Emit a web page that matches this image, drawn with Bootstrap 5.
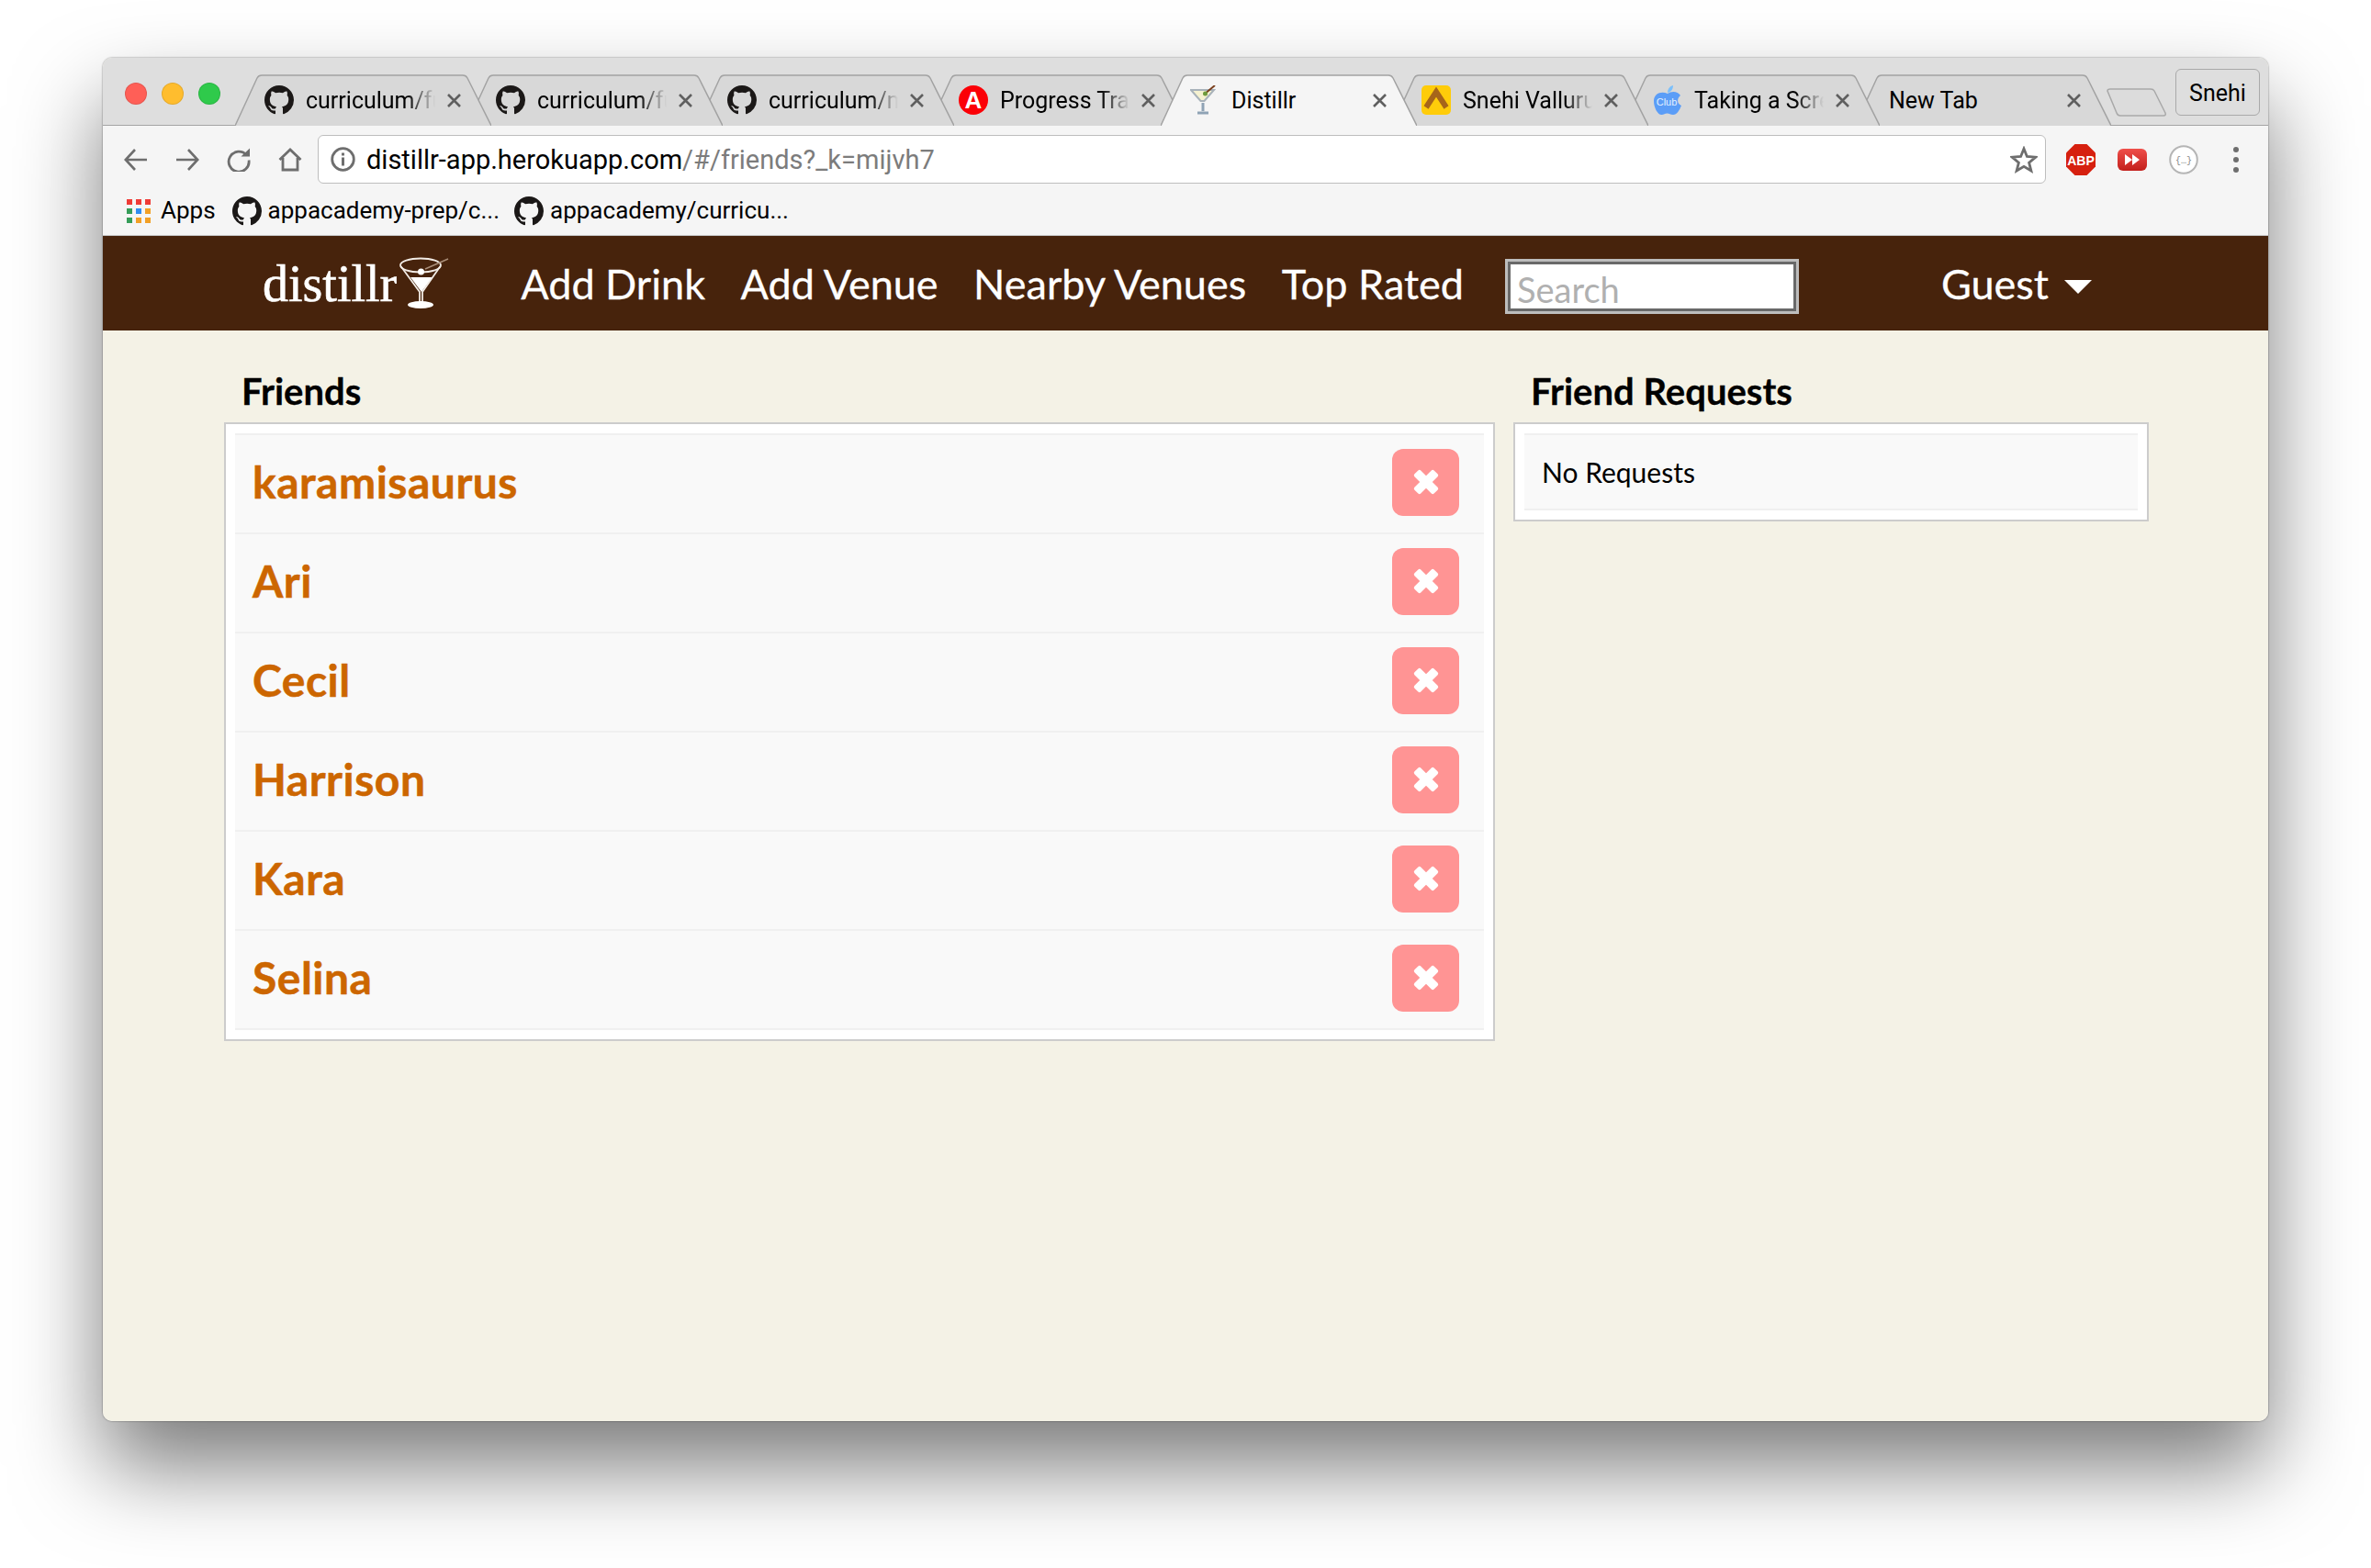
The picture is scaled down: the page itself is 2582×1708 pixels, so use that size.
<!DOCTYPE html>
<html lang="en">
<head>
    <meta charset="UTF-8">
    <title>Distillr</title>
    <link href="https://cdn.jsdelivr.net/npm/bootstrap@5.3.0/dist/css/bootstrap.min.css" rel="stylesheet">
    <style>
        body {
            background: #fff;
            height: 1708px;
            overflow: hidden;
            padding: 63px 0 0 112px;
            font-family: "Lato", sans-serif;
        }
        .mac-window {
            width: 2358px;
            height: 1485px;
            border-radius: 10px;
            overflow: hidden;
            background: #f4f2e6;
        }
        .window-frame {
            width: 2358px;
            height: 1485px;
            border-radius: 10px;
            box-shadow: 0 50px 95px rgba(0, 0, 0, .52), 0 0 2px rgba(0, 0, 0, .55);
        }

        /* browser chrome */
        .chrome-text { font-family: "Roboto", "Liberation Sans", sans-serif; color: #000; }
        .tab-strip {
            height: 74px;
            background: #dedede;
            border-bottom: 1px solid #a5a5a5;
            padding-left: 24px;
        }
        .traffic-lights { width: 120px; gap: 16px; align-self: flex-start; padding-top: 27px; }
        .light { width: 24px; height: 24px; border-radius: 50%; border: 1px solid rgba(0, 0, 0, .1); }
        .light-red { background: #ff5f57; }
        .light-yellow { background: #ffbd2e; }
        .light-green { background: #2fca4b; }
        .tab-list { margin-bottom: -1px; }
        .chrome-tab {
            position: relative;
            width: 279px;
            height: 56px;
            margin-right: -27px;
            font-size: 25px;
            padding-left: 32px;
        }
        .chrome-tab:last-child { margin-right: 0; }
        .chrome-tab:nth-child(1) { z-index: 8; }
        .chrome-tab:nth-child(2) { z-index: 7; }
        .chrome-tab:nth-child(3) { z-index: 6; }
        .chrome-tab:nth-child(4) { z-index: 5; }
        .chrome-tab:nth-child(5) { z-index: 9; }
        .chrome-tab:nth-child(6) { z-index: 4; }
        .chrome-tab:nth-child(7) { z-index: 3; }
        .chrome-tab:nth-child(8) { z-index: 2; }
        .tab-shape { position: absolute; inset: 0; width: 279px; height: 56px; fill: #d8d8d8; stroke: #a3a3a3; stroke-width: 1.5; }
        .tab-active .tab-shape { fill: #f5f5f5; }
        .tab-icon { position: relative; width: 32px; height: 32px; flex: none; }
        .tab-title {
            position: relative;
            width: 141px;
            margin-left: 13px;
            padding-top: 2px;
            white-space: nowrap;
            -webkit-mask-image: linear-gradient(to right, #000 78%, transparent 100%);
            mask-image: linear-gradient(to right, #000 78%, transparent 100%);
        }
        .tab-title-plain { -webkit-mask-image: none; mask-image: none; }
        .tab-title-wide { width: 181px; margin-left: 5px; -webkit-mask-image: none; mask-image: none; }
        .tab-close { position: relative; width: 15px; height: 15px; margin-left: 13px; flex: none; }
        .new-tab-btn { width: 65px; height: 31px; margin: 0 0 9px -5px; flex: none; fill: #dcdcdc; stroke: #a9a9a9; stroke-width: 1.5; }
        .profile-btn {
            width: 92px;
            height: 51px;
            margin: 0 0 10px 10px;
            padding-top: 2px;
            border: 1px solid #a9a9a9;
            border-radius: 6px;
            font-size: 25px;
        }
        .toolbar { height: 120px; background: #f5f5f5; border-bottom: 1px solid #c4c4c4; }
        .url-row { height: 73px; padding: 10px 0 10px 23px; }
        .tool-icon { width: 26px; height: 26px; flex: none; margin-right: 30px; }
        .tool-icon:nth-child(4) { margin-right: 17px; }
        .url-box {
            width: 1882px;
            height: 53px;
            background: #fff;
            border: 1px solid #bdbdbd;
            border-radius: 6px;
            padding: 0 8px 0 13px;
            font-size: 29px;
        }
        .url-text { margin-left: 12px; padding-top: 2px; }
        .url-dim { color: #7c7c7c; }
        .ext-row { margin-left: 22px; }
        .ext-slot { width: 32px; height: 34px; margin-right: 24px; flex: none; }
        .ext-menu { margin-left: 13px; }
        .bookmark-row { padding-left: 26px; font-size: 26px; height: 39px; }
        .bm-item { gap: 7px; }
        .bm-apps { gap: 11px; margin-right: 18px; }
        .gh-icon { width: 32px; height: 32px; flex: none; }
        .apps-grid { width: 26px; height: 26px; }

        /* distillr page */
        .distillr-nav { height: 103px; background: #47230c; padding: 0 0 0 174px; }
        .distillr-brand {
            color: #fff;
            font-family: "Liberation Serif", serif;
            font-size: 56px;
            line-height: 1;
            padding: 0;
            margin: 0 78px 0 0;
            -webkit-text-stroke: .6px #fff;
        }
        .distillr-brand:hover { color: #fff; }
        .brand-glass { width: 54px; height: 58px; margin-left: 3px; }
        .distillr-links { gap: 38.500px; flex-direction: row; }
        .distillr-links .nav-link, .guest-link.nav-link {
            color: #fff;
            font-size: 45px;
            line-height: 1.2;
            padding: 0;
            -webkit-text-stroke: .3px #fff;
        }
        .search-box.form-control {
            width: 320px;
            height: 60px;
            margin: 6px 0 0 45px;
            padding: 6px 10px 0;
            font-family: "Lato", sans-serif;
            font-size: 38px;
            border-radius: 0;
            border: 3px solid #bdbdbd;
            box-shadow: inset 0 3px 0 #696969, inset 3px 0 0 #696969, inset 0 -3px 0 #696969, inset -3px 0 0 #696969;
        }
        .search-box.form-control::placeholder { color: #b0b0b0; }
        .guest-link { margin-left: 155px; }
        .guest-link.dropdown-toggle::after {
            margin-left: 17px;
            vertical-align: 6px;
            border-top-width: 15px;
            border-left-width: 15px;
            border-right-width: 15px;
        }
        .page-body { padding: 42px 130px 0 132px; display: grid; grid-template-columns: 2fr 1fr; column-gap: 20px; align-items: start; }
        .section-title {
            font-size: 40px;
            font-weight: 700;
            line-height: 48px;
            margin: 0 0 10px 19px;
            color: #000;
            -webkit-text-stroke: .3px #000;
        }
        .friends-panel { background: #fff; border: 2px solid #ccc; padding: 10px; }
        .friends-panel .list-group-item {
            background: #f9f9f9;
            border: 0;
            border-top: 2px solid #f0f0f0;
            border-radius: 0;
            padding: 0 27px 4px 19px;
            height: 108px;
        }
        .friends-panel .list-group-item:last-child { border-bottom: 2px solid #f0f0f0; height: 110px; }
        .friends-panel .no-requests.list-group-item { height: 84px; padding: 0 0 0 19px; font-size: 30px; color: #000; }
        .friend-name {
            color: #cc6600;
            font-size: 48px;
            font-weight: 700;
            letter-spacing: .5px;
            -webkit-text-stroke: .5px #cc6600;
            text-decoration: none;
        }
        .friend-name:hover { color: #cc6600; }
        .remove-btn.btn {
            width: 73px;
            height: 73px;
            padding: 0;
            border: 0;
            border-radius: 12px;
            background: #ff9494;
        }
        .remove-btn svg { width: 40px; height: 40px; }
    </style>
</head>
<body>
<svg width="0" height="0" class="position-absolute">
    <defs>
        <linearGradient id="ytRed" x1="0" y1="0" x2="0" y2="1"><stop offset="0" stop-color="#ef4f4a"/><stop offset="1" stop-color="#c31f1b"/></linearGradient>
        <symbol id="gh" viewBox="0 0 16 16"><path fill="#1b1817" stroke="none" d="M8 0C3.58 0 0 3.58 0 8c0 3.54 2.29 6.53 5.47 7.59.4.07.55-.17.55-.38 0-.19-.01-.82-.01-1.49-2.01.37-2.53-.49-2.69-.94-.09-.23-.48-.94-.82-1.13-.28-.15-.68-.52-.01-.53.63-.01 1.08.58 1.23.82.72 1.21 1.87.87 2.33.66.07-.52.28-.87.51-1.07-1.78-.2-3.64-.89-3.64-3.95 0-.87.31-1.59.82-2.15-.08-.2-.36-1.02.08-2.12 0 0 .67-.21 2.2.82.64-.18 1.32-.27 2-.27.68 0 1.36.09 2 .27 1.53-1.04 2.2-.82 2.2-.82.44 1.1.16 1.92.08 2.12.51.56.82 1.27.82 2.15 0 3.07-1.87 3.75-3.65 3.95.29.25.54.73.54 1.48 0 1.07-.01 1.93-.01 2.2 0 .21.15.46.55.38A8.013 8.013 0 0016 8c0-4.42-3.58-8-8-8z"/></symbol>
        <symbol id="tabBg" viewBox="0 0 279 56"><path d="M0 56 L24 4 Q25.500 1 29 1 L248 1 Q251.500 1 253 4 L279 56"/></symbol>
        <symbol id="closeX" viewBox="0 0 15 15"><path d="M1 1 L14 14 M14 1 L1 14" stroke="#5f5f5f" stroke-width="2.600" fill="none"/></symbol>
        <symbol id="removeX" viewBox="0 0 40 40"><g fill="#fff" transform="rotate(45 20 20)"><rect x="5" y="15.200" width="30" height="9.600" rx="2"/><rect x="15.200" y="5" width="9.600" height="30" rx="2"/></g></symbol>
    </defs>
</svg>

<div class="window-frame">
<div class="mac-window">
    <div class="tab-strip d-flex align-items-end chrome-text">
        <div class="traffic-lights d-flex">
            <span class="light light-red"></span>
            <span class="light light-yellow"></span>
            <span class="light light-green"></span>
        </div>
        <div class="tab-list d-flex">
            <div class="chrome-tab d-flex align-items-center">
                <svg class="tab-shape"><use href="#tabBg"/></svg>
                <svg class="tab-icon"><use href="#gh"/></svg>
                <span class="tab-title">curriculum/fu</span>
                <svg class="tab-close"><use href="#closeX"/></svg>
            </div>
            <div class="chrome-tab d-flex align-items-center">
                <svg class="tab-shape"><use href="#tabBg"/></svg>
                <svg class="tab-icon"><use href="#gh"/></svg>
                <span class="tab-title">curriculum/fu</span>
                <svg class="tab-close"><use href="#closeX"/></svg>
            </div>
            <div class="chrome-tab d-flex align-items-center">
                <svg class="tab-shape"><use href="#tabBg"/></svg>
                <svg class="tab-icon"><use href="#gh"/></svg>
                <span class="tab-title">curriculum/m</span>
                <svg class="tab-close"><use href="#closeX"/></svg>
            </div>
            <div class="chrome-tab d-flex align-items-center">
                <svg class="tab-shape"><use href="#tabBg"/></svg>
                <svg class="tab-icon" viewBox="0 0 32 32">
                    <circle cx="16" cy="16" r="16" fill="#fb0007"/>
                    <text x="16" y="25" text-anchor="middle" font-family="Liberation Sans" font-weight="700" font-size="26" fill="#fff">A</text>
                </svg>
                <span class="tab-title">Progress Tra</span>
                <svg class="tab-close"><use href="#closeX"/></svg>
            </div>
            <div class="chrome-tab tab-active d-flex align-items-center">
                <svg class="tab-shape"><use href="#tabBg"/></svg>
                <svg class="tab-icon" viewBox="0 0 32 32">
                    <path d="M1 5 H26 L15.500 17 H11.500 Z" fill="#f5f1d0" stroke="#a8b2ba" stroke-width="2"/>
                    <path d="M14 19 V28" stroke="#8fa3b5" stroke-width="3"/>
                    <path d="M8 30 H20" stroke="#8fa3b5" stroke-width="3"/>
                    <path d="M15 10 L27 0" stroke="#7a3f1d" stroke-width="2"/>
                    <circle cx="16.500" cy="9" r="2.500" fill="#6e9a3c"/>
                </svg>
                <span class="tab-title tab-title-plain">Distillr</span>
                <svg class="tab-close"><use href="#closeX"/></svg>
            </div>
            <div class="chrome-tab d-flex align-items-center">
                <svg class="tab-shape"><use href="#tabBg"/></svg>
                <svg class="tab-icon" viewBox="0 0 32 32">
                    <rect width="32" height="32" rx="5" fill="#ffcc0a"/>
                    <path d="M5 24 L16 7 L27 24" fill="none" stroke="#a7651a" stroke-width="6"/>
                </svg>
                <span class="tab-title">Snehi Valluru</span>
                <svg class="tab-close"><use href="#closeX"/></svg>
            </div>
            <div class="chrome-tab d-flex align-items-center">
                <svg class="tab-shape"><use href="#tabBg"/></svg>
                <svg class="tab-icon" viewBox="0 0 32 32">
                    <path d="M16 9 C20 6 27 6 30 11 C26 14 26 20 31 22 C29 27 26 32 22 32 C19 32 18 30.500 15.500 30.500 C13 30.500 12 32 9.500 32 C5 32 1 24 1 17 C1 9 9 6 16 9 Z" fill="#5b9df7"/>
                    <path d="M16 8 C16 4 18 1 22 0 C22 4 20 7 16 8 Z" fill="#7cc0fb"/>
                    <text x="15" y="22" text-anchor="middle" font-family="Liberation Sans" font-size="11" fill="#e3f0ff">Club</text>
                </svg>
                <span class="tab-title">Taking a Scre</span>
                <svg class="tab-close"><use href="#closeX"/></svg>
            </div>
            <div class="chrome-tab d-flex align-items-center">
                <svg class="tab-shape"><use href="#tabBg"/></svg>
                <span class="tab-title tab-title-wide">New Tab</span>
                <svg class="tab-close"><use href="#closeX"/></svg>
            </div>
        </div>
        <svg class="new-tab-btn" viewBox="0 0 65 31"><path d="M1 3 Q1 1 4 1 H48 Q51 1 52 3 L64 27 Q65 30 62 30 H15 Q12 30 11 27 Z"/></svg>
        <div class="profile-btn d-flex align-items-center justify-content-center">Snehi</div>
    </div>

    <div class="toolbar chrome-text">
        <div class="url-row d-flex align-items-center">
            <svg class="tool-icon" viewBox="0 0 26 26" fill="none" stroke="#6e6e6e" stroke-width="2.600"><path d="M25 13 H2 M12 2 L1.800 13 L12 24"/></svg>
            <svg class="tool-icon" viewBox="0 0 26 26" fill="none" stroke="#6e6e6e" stroke-width="2.600"><path d="M1 13 H24 M14 2 L24.200 13 L14 24"/></svg>
            <svg class="tool-icon" viewBox="0 0 26 26" fill="none" stroke="#6e6e6e" stroke-width="2.800"><path d="M21.500 8 A11 11 0 1 0 24 13.500"/><path d="M15.500 9.500 H25 V0.500 Z" fill="#6e6e6e" stroke="none"/></svg>
            <svg class="tool-icon" viewBox="0 0 26 26" fill="none" stroke="#6e6e6e" stroke-width="2.800"><path d="M1.500 13 L13 2 L24.500 13 M5 11 V24 H21 V11"/></svg>
            <div class="url-box d-flex align-items-center">
                <svg width="27" height="27" viewBox="0 0 27 27" class="flex-none">
                    <circle cx="13.500" cy="13.500" r="11.800" fill="none" stroke="#6e6e6e" stroke-width="2.800"/>
                    <rect x="12" y="11.500" width="3" height="9" fill="#6e6e6e"/>
                    <rect x="12" y="6.500" width="3" height="3" fill="#6e6e6e"/>
                </svg>
                <span class="url-text">distillr-app.herokuapp.com<span class="url-dim">/#/friends?_k=mijvh7</span></span>
                <svg class="ms-auto" width="30" height="30" viewBox="0 0 30 30"><path d="M15 3 L18.400 11.500 L27.800 12.200 L20.600 18.200 L22.900 27 L15 22.300 L7.100 27 L9.400 18.200 L2.200 12.200 L11.600 11.500 Z" fill="none" stroke="#6e6e6e" stroke-width="2.800"/></svg>
            </div>
            <div class="ext-row d-flex align-items-center">
                <svg class="ext-slot" viewBox="0 0 32 34">
                    <path d="M9.500 0 H22.500 L32 9.500 V24.500 L22.500 34 H9.500 L0 24.500 V9.500 Z" fill="#d6200f"/>
                    <text x="16" y="22.500" text-anchor="middle" font-family="Liberation Sans" font-weight="700" font-size="14" fill="#fff">ABP</text>
                </svg>
                <svg class="ext-slot" viewBox="0 0 32 34">
                    <rect y="5" width="32" height="24" rx="6" fill="url(#ytRed)"/>
                    <path d="M8 11 L16 17 L8 23 Z M16 11 L24 17 L16 23 Z" fill="#fff"/>
                </svg>
                <svg class="ext-slot" viewBox="0 0 32 34">
                    <circle cx="16" cy="17" r="14.800" fill="#fff" stroke="#b5b5b5" stroke-width="2"/>
                    <text x="16" y="21" text-anchor="middle" font-family="Liberation Mono" font-size="10" fill="#888">{…}</text>
                </svg>
                <svg width="8" height="30" viewBox="0 0 8 30" class="ext-menu"><circle cx="4" cy="4" r="3" fill="#6e6e6e"/><circle cx="4" cy="15" r="3" fill="#6e6e6e"/><circle cx="4" cy="26" r="3" fill="#6e6e6e"/></svg>
            </div>
        </div>
        <div class="bookmark-row d-flex align-items-center">
            <div class="d-flex align-items-center bm-apps">
                <svg class="apps-grid" viewBox="0 0 26 26">
                    <rect x="0" y="0" width="6" height="6" fill="#ef3b36"/><rect x="10" y="0" width="6" height="6" fill="#ef3b36"/><rect x="20" y="0" width="6" height="6" fill="#ef3b36"/>
                    <rect x="0" y="10" width="6" height="6" fill="#359d58"/><rect x="10" y="10" width="6" height="6" fill="#2f8df0"/><rect x="20" y="10" width="6" height="6" fill="#f2a025"/>
                    <rect x="0" y="20" width="6" height="6" fill="#359d58"/><rect x="10" y="20" width="6" height="6" fill="#f2a025"/><rect x="20" y="20" width="6" height="6" fill="#f2a025"/>
                </svg>
                <span>Apps</span>
            </div>
            <div class="d-flex align-items-center bm-item me-3">
                <svg class="gh-icon"><use href="#gh"/></svg>
                <span>appacademy-prep/c...</span>
            </div>
            <div class="d-flex align-items-center bm-item">
                <svg class="gh-icon"><use href="#gh"/></svg>
                <span>appacademy/curricu...</span>
            </div>
        </div>
    </div>

    <nav class="navbar distillr-nav flex-nowrap justify-content-start">
        <a class="navbar-brand distillr-brand d-flex align-items-center" href="#">
            distillr
            <svg class="brand-glass" viewBox="0 0 54 58">
                <ellipse cx="23" cy="9" rx="22" ry="7.500" fill="none" stroke="#f2ece6" stroke-width="1.800"/>
                <path d="M12 22 H36 L24 38 Z" fill="#fff"/>
                <circle cx="23.500" cy="16" r="3.500" fill="#fff"/>
                <path d="M28 13 L53 2" stroke="#a98d78" stroke-width="1.500"/>
                <path d="M1.500 10 L22 38 V50 M44.500 10 L25 38 V50" fill="none" stroke="#f2ece6" stroke-width="1.800"/>
                <ellipse cx="23" cy="52" rx="14" ry="4" fill="#fff"/>
            </svg>
        </a>
        <ul class="navbar-nav distillr-links">
            <li class="nav-item"><a class="nav-link" href="#">Add Drink</a></li>
            <li class="nav-item"><a class="nav-link" href="#">Add Venue</a></li>
            <li class="nav-item"><a class="nav-link" href="#">Nearby Venues</a></li>
            <li class="nav-item"><a class="nav-link" href="#">Top Rated</a></li>
        </ul>
        <input class="form-control search-box" type="text" placeholder="Search">
        <a class="nav-link guest-link dropdown-toggle" href="#">Guest</a>
    </nav>

    <div class="page-body">
        <section>
            <h2 class="section-title">Friends</h2>
            <div class="friends-panel">
                <ul class="list-group">
                    <li class="list-group-item d-flex align-items-center justify-content-between">
                        <a class="friend-name" href="#">karamisaurus</a>
                        <button class="btn remove-btn d-flex align-items-center justify-content-center" type="button"><svg><use href="#removeX"/></svg></button>
                    </li>
                    <li class="list-group-item d-flex align-items-center justify-content-between">
                        <a class="friend-name" href="#">Ari</a>
                        <button class="btn remove-btn d-flex align-items-center justify-content-center" type="button"><svg><use href="#removeX"/></svg></button>
                    </li>
                    <li class="list-group-item d-flex align-items-center justify-content-between">
                        <a class="friend-name" href="#">Cecil</a>
                        <button class="btn remove-btn d-flex align-items-center justify-content-center" type="button"><svg><use href="#removeX"/></svg></button>
                    </li>
                    <li class="list-group-item d-flex align-items-center justify-content-between">
                        <a class="friend-name" href="#">Harrison</a>
                        <button class="btn remove-btn d-flex align-items-center justify-content-center" type="button"><svg><use href="#removeX"/></svg></button>
                    </li>
                    <li class="list-group-item d-flex align-items-center justify-content-between">
                        <a class="friend-name" href="#">Kara</a>
                        <button class="btn remove-btn d-flex align-items-center justify-content-center" type="button"><svg><use href="#removeX"/></svg></button>
                    </li>
                    <li class="list-group-item d-flex align-items-center justify-content-between">
                        <a class="friend-name" href="#">Selina</a>
                        <button class="btn remove-btn d-flex align-items-center justify-content-center" type="button"><svg><use href="#removeX"/></svg></button>
                    </li>
                </ul>
            </div>
        </section>
        <section>
            <h2 class="section-title">Friend Requests</h2>
            <div class="friends-panel">
                <ul class="list-group">
                    <li class="list-group-item no-requests d-flex align-items-center">No Requests</li>
                </ul>
            </div>
        </section>
    </div>
</div>
</div>
<script src="https://cdn.jsdelivr.net/npm/bootstrap@5.3.0/dist/js/bootstrap.bundle.min.js"></script>
</body>
</html>
